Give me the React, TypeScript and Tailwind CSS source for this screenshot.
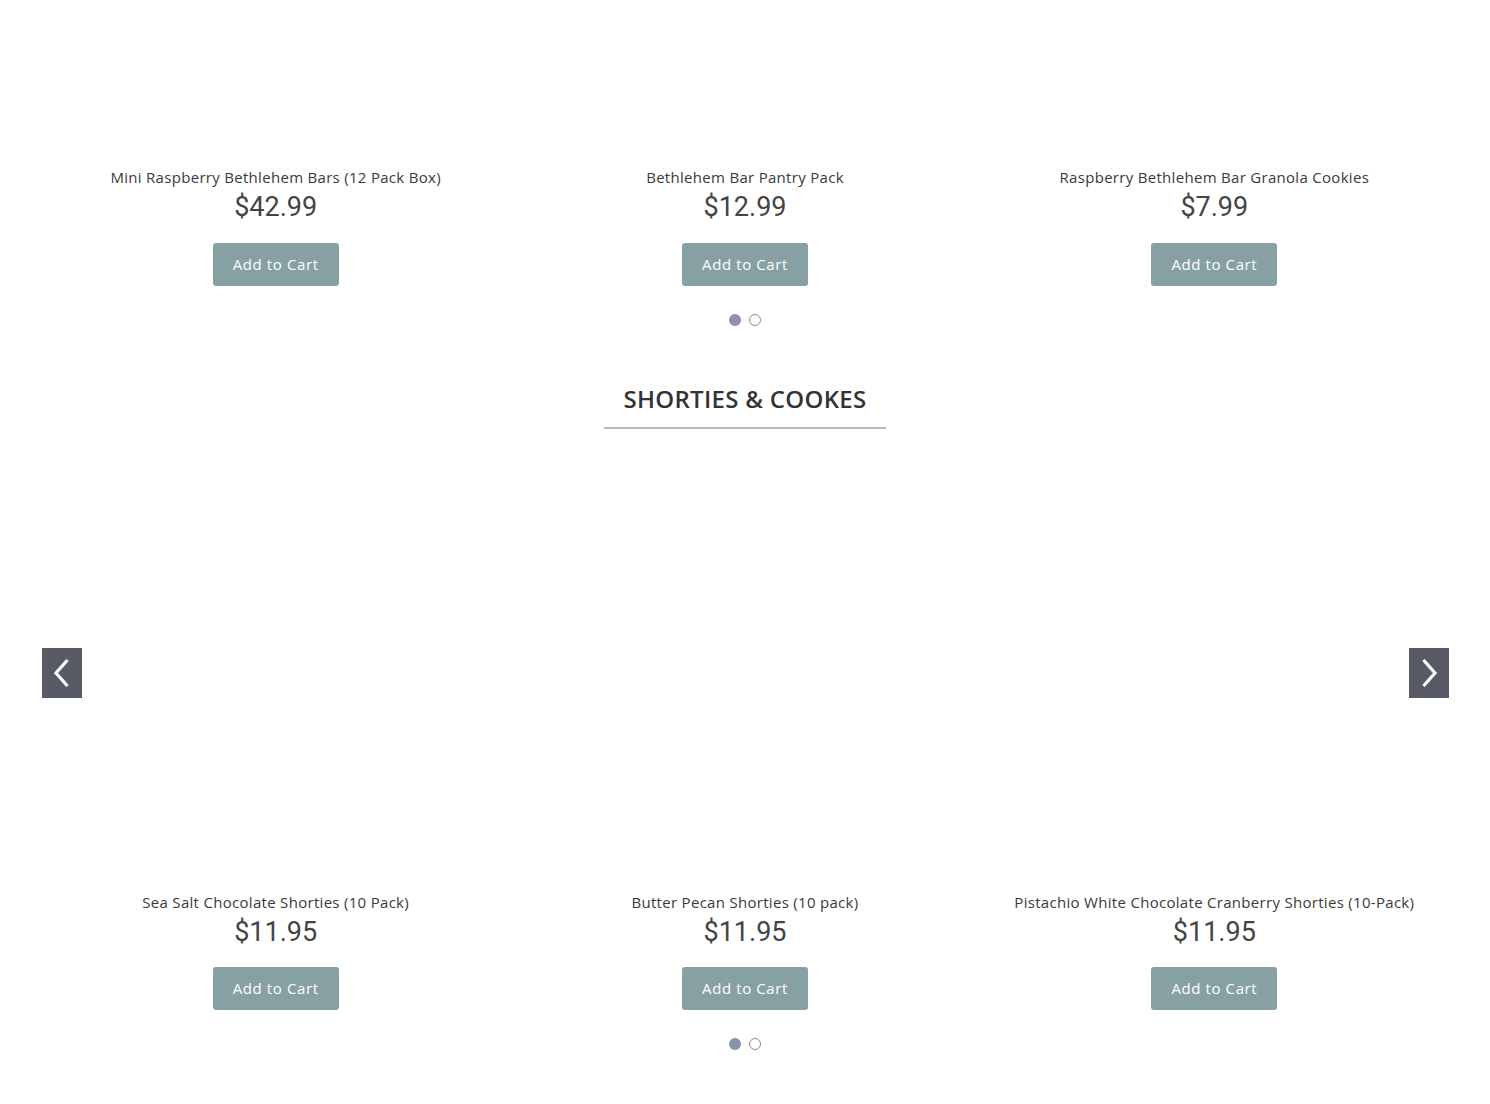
import React from "react";

type P = { name: string; price: string };

const row1: P[] = [
  { name: "Mini Raspberry Bethlehem Bars (12 Pack Box)", price: "$42.99" },
  { name: "Bethlehem Bar Pantry Pack", price: "$12.99" },
  { name: "Raspberry Bethlehem Bar Granola Cookies", price: "$7.99" },
];

const row2: P[] = [
  { name: "Sea Salt Chocolate Shorties (10 Pack)", price: "$11.95" },
  { name: "Butter Pecan Shorties (10 pack)", price: "$11.95" },
  { name: "Pistachio White Chocolate Cranberry Shorties (10-Pack)", price: "$11.95" },
];

function Card({ p, imgH, btnMt }: { p: P; imgH: string; btnMt: string }) {
  return (
    <div className="flex flex-col items-center">
      <div className={imgH + " w-full"} />
      <div
        className="text-[15px] leading-[22px] tracking-[0.3px] text-[#3a3a3a] text-center whitespace-nowrap"
        style={{ fontFamily: "'Open Sans', 'Noto Sans', sans-serif" }}
      >
        {p.name}
      </div>
      <div
        className="mt-[4px] text-[27px] leading-[30px] text-[#444444]"
        style={{ fontFamily: "Roboto, 'Liberation Sans', sans-serif" }}
      >
        {p.price}
      </div>
      <button
        className={btnMt + " h-[43px] w-[126px] rounded-[3px] bg-[#87a0a3] text-white text-[15px] tracking-[0.6px]"}
        style={{ fontFamily: "'Open Sans', 'Noto Sans', sans-serif" }}
      >
        Add to Cart
      </button>
    </div>
  );
}

function Dots() {
  return (
    <div className="flex justify-center gap-[8px]">
      <span className="block w-[12px] h-[12px] rounded-full bg-[#8893ae]" />
      <span className="block w-[12px] h-[12px] rounded-full border border-[#8d849c] bg-white" />
    </div>
  );
}

function Arrow({ dir }: { dir: "l" | "r" }) {
  return (
    <div className="w-[40px] h-[50px] bg-[#585a66] flex items-center justify-center">
      <svg width="20" height="30" viewBox="0 0 20 30" fill="none">
        {dir === "l" ? (
          <path d="M15.5 2 L4 15 L15.5 28" stroke="white" strokeWidth="3.2" />
        ) : (
          <path d="M4.5 2 L16 15 L4.5 28" stroke="white" strokeWidth="3.2" />
        )}
      </svg>
    </div>
  );
}

export default function App() {
  return (
    <div className="w-[1490px] min-h-[1104px] bg-white overflow-hidden">
      <div className="px-[41px]">
        <div className="grid grid-cols-3">
          {row1.map((p) => (
            <Card key={p.name} p={p} imgH="h-[166px]" btnMt="mt-[21px]" />
          ))}
        </div>
        <div className="mt-[28px]">
          <Dots />
        </div>
      </div>

      <div className="mt-[57px] flex justify-center">
        <h2
          className="px-[19px] pb-[12px] border-b-2 border-[#b3bac2] text-[24px] leading-[32px] font-semibold tracking-[0.3px] text-[#333333]"
          style={{ fontFamily: "'Open Sans', 'Noto Sans', sans-serif" }}
        >
          SHORTIES &amp; COOKES
        </h2>
      </div>

      <div className="relative px-[41px]">
        <div className="grid grid-cols-3">
          {row2.map((p) => (
            <Card key={p.name} p={p} imgH="h-[462px]" btnMt="mt-[20px]" />
          ))}
        </div>
        <div className="mt-[28px]">
          <Dots />
        </div>
        <div className="absolute left-[42px] top-[219px]">
          <Arrow dir="l" />
        </div>
        <div className="absolute right-[41px] top-[219px]">
          <Arrow dir="r" />
        </div>
      </div>
    </div>
  );
}
